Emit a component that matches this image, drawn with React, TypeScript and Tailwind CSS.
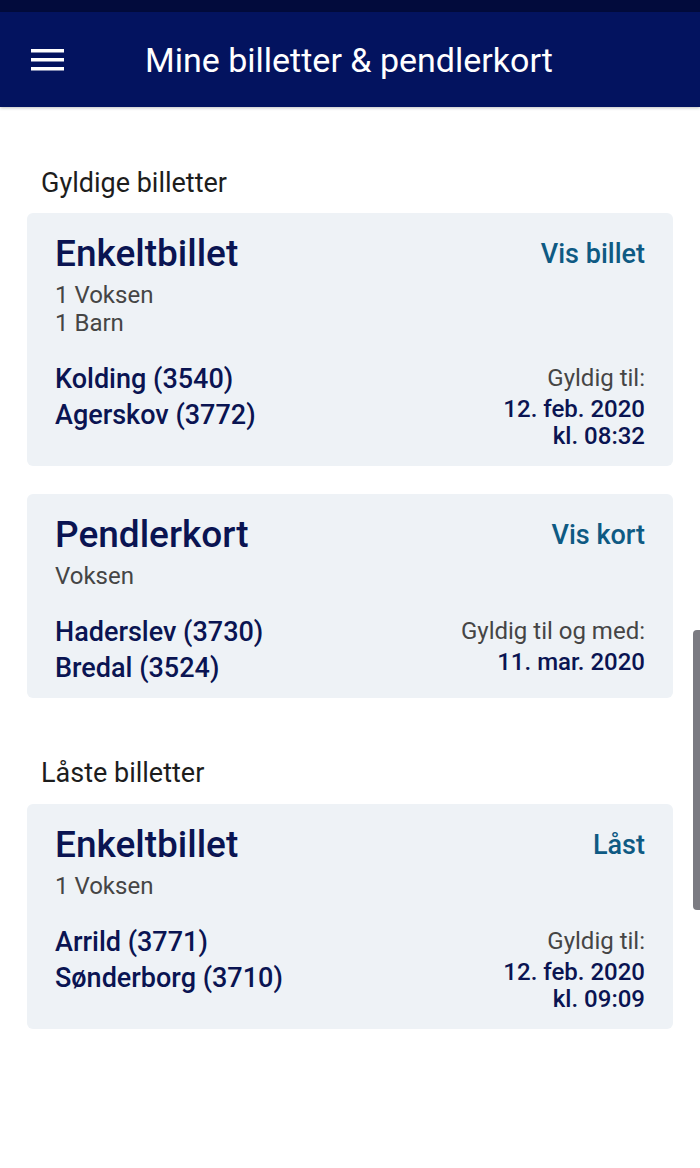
const navy = "text-[#0a1452]";

interface TicketProps {
  title: string;
  action: string;
  passengers: string[];
  from: string;
  to: string;
  validLabel: string;
  validLines: string[];
}

function TicketCard({ title, action, passengers, from, to, validLabel, validLines }: TicketProps) {
  return (
    <div className="mx-[27px] rounded-md bg-[#eef2f6] px-[28px] pt-[19px] pb-[12px]">
      <div className="flex items-start justify-between">
        <h2 className={`text-[37px] leading-[44px] font-medium ${navy}`}>{title}</h2>
        <span className="text-[27px] leading-[44px] font-medium text-[#0e5a83]">{action}</span>
      </div>
      <div className="mt-[5px] text-[24px] leading-[28px] text-[#454545]">
        {passengers.map((p) => (
          <div key={p}>{p}</div>
        ))}
      </div>
      <div className="mt-[24px] flex items-start justify-between">
        <div className={`text-[27px] leading-[36px] font-medium ${navy}`}>
          <div>{from}</div>
          <div>{to}</div>
        </div>
        <div className="pt-[2px] text-right">
          <div className="text-[24px] leading-[30px] text-[#454545]">{validLabel}</div>
          <div className={`mt-[3px] pb-[4px] text-[24px] leading-[27px] font-medium ${navy}`}>
            {validLines.map((l) => (
              <div key={l}>{l}</div>
            ))}
          </div>
        </div>
      </div>
    </div>
  );
}

export default function App() {
  return (
    <div className="relative min-h-[1168px] bg-white font-['Roboto',sans-serif]">
      <div className="h-[12px] bg-[#020b3c]" />
      <header className="flex h-[95px] items-center bg-[#03135f] shadow-[0_1px_3px_rgba(0,0,0,0.25)]">
        <svg className="ml-[31px]" width="34" height="24" viewBox="0 0 34 24">
          <rect x="0" y="1" width="33" height="3.5" fill="#fff" />
          <rect x="0" y="10" width="33" height="3.5" fill="#fff" />
          <rect x="0" y="19" width="33" height="3.5" fill="#fff" />
        </svg>
        <h1 className="ml-[80px] text-[34px] leading-none text-white">
          Mine billetter &amp; pendlerkort
        </h1>
      </header>

      <section className="pt-[61px]">
        <h3 className="mb-[15px] pl-[41px] text-[27px] leading-[30px] text-[#1d1d1d]">Gyldige billetter</h3>
        <div className="flex flex-col gap-[28px]">
          <TicketCard
            title="Enkeltbillet"
            action="Vis billet"
            passengers={["1 Voksen", "1 Barn"]}
            from="Kolding (3540)"
            to="Agerskov (3772)"
            validLabel="Gyldig til:"
            validLines={["12. feb. 2020", "kl. 08:32"]}
          />
          <TicketCard
            title="Pendlerkort"
            action="Vis kort"
            passengers={["Voksen"]}
            from="Haderslev (3730)"
            to="Bredal (3524)"
            validLabel="Gyldig til og med:"
            validLines={["11. mar. 2020"]}
          />
        </div>
      </section>

      <section className="pt-[60px]">
        <h3 className="mb-[16px] pl-[41px] text-[27px] leading-[30px] text-[#1d1d1d]">Låste billetter</h3>
        <TicketCard
          title="Enkeltbillet"
          action="Låst"
          passengers={["1 Voksen"]}
          from="Arrild (3771)"
          to="Sønderborg (3710)"
          validLabel="Gyldig til:"
          validLines={["12. feb. 2020", "kl. 09:09"]}
        />
      </section>

      <div className="absolute right-0 top-[630px] h-[280px] w-[7px] rounded-l-[4px] bg-[#7b7b82]" />
    </div>
  );
}
